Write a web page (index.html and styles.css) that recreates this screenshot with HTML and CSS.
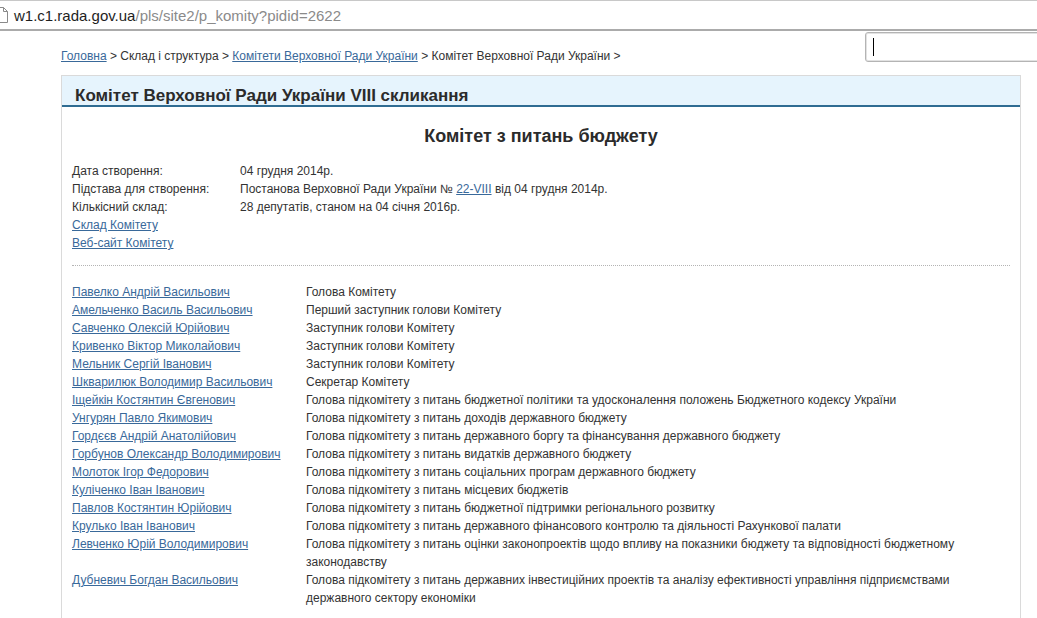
FILE: index.html
```html
<!DOCTYPE html>
<html lang="uk">
<head>
<meta charset="utf-8">
<title>Комітет з питань бюджету</title>
<link rel="stylesheet" href="styles.css">
</head>
<body>
<div class="addressbar">
  <svg class="page-icon" width="12" height="16" viewBox="0 0 12 16"><path d="M0.5 0.5 H7.5 L11.5 4.5 V15.5 H0.5 Z" fill="#fff" stroke="#8a8a8a"/><path d="M7.5 0.5 V4.5 H11.5" fill="none" stroke="#8a8a8a"/></svg>
  <span class="url"><span class="host">w1.c1.rada.gov.ua</span><span class="path">/pls/site2/p_komity?pidid=2622</span></span>
</div>
<div class="search"><span class="caret"></span></div>
<div class="page">
  <div class="breadcrumb"><a href="#">Головна</a> &gt; Склад і структура &gt; <a href="#">Комітети Верховної Ради України</a> &gt; Комітет Верховної Ради України &gt;</div>
  <div class="panel">
    <div class="panel-header">Комітет Верховної Ради України VIII скликання</div>
    <div class="panel-body">
      <h1 class="title">Комітет з питань бюджету</h1>
      <div class="info">
        <span class="label">Дата створення:</span><span>04 грудня 2014р.</span>
        <span class="label">Підстава для створення:</span><span>Постанова Верховної Ради України № <a href="#">22-VIII</a> від 04 грудня 2014р.</span>
        <span class="label">Кількісний склад:</span><span>28 депутатів, станом на 04 січня 2016р.</span>
        <span class="full"><a href="#">Склад Комітету</a></span>
        <span class="full"><a href="#">Веб-сайт Комітету</a></span>
      </div>
      <div class="divider"></div>
      <div class="members">
        <a href="#">Павелко Андрій Васильович</a><span>Голова Комітету</span>
        <a href="#">Амельченко Василь Васильович</a><span>Перший заступник голови Комітету</span>
        <a href="#">Савченко Олексій Юрійович</a><span>Заступник голови Комітету</span>
        <a href="#">Кривенко Віктор Миколайович</a><span>Заступник голови Комітету</span>
        <a href="#">Мельник Сергій Іванович</a><span>Заступник голови Комітету</span>
        <a href="#">Шкварилюк Володимир Васильович</a><span>Секретар Комітету</span>
        <a href="#">Іщейкін Костянтин Євгенович</a><span>Голова підкомітету з питань бюджетної політики та удосконалення положень Бюджетного кодексу України</span>
        <a href="#">Унгурян Павло Якимович</a><span>Голова підкомітету з питань доходів державного бюджету</span>
        <a href="#">Гордєєв Андрій Анатолійович</a><span>Голова підкомітету з питань державного боргу та фінансування державного бюджету</span>
        <a href="#">Горбунов Олександр Володимирович</a><span>Голова підкомітету з питань видатків державного бюджету</span>
        <a href="#">Молоток Ігор Федорович</a><span>Голова підкомітету з питань соціальних програм державного бюджету</span>
        <a href="#">Куліченко Іван Іванович</a><span>Голова підкомітету з питань місцевих бюджетів</span>
        <a href="#">Павлов Костянтин Юрійович</a><span>Голова підкомітету з питань бюджетної підтримки регіонального розвитку</span>
        <a href="#">Крулько Іван Іванович</a><span>Голова підкомітету з питань державного фінансового контролю та діяльності Рахункової палати</span>
        <a href="#">Левченко Юрій Володимирович</a><span>Голова підкомітету з питань оцінки законопроектів щодо впливу на показники бюджету та відповідності бюджетному законодавству</span>
        <a href="#">Дубневич Богдан Васильович</a><span>Голова підкомітету з питань державних інвестиційних проектів та аналізу ефективності управління підприємствами державного сектору економіки</span>
      </div>
    </div>
  </div>
</div>
</body>
</html>
```
FILE: styles.css
```css
* { box-sizing: border-box; }
html, body { margin: 0; padding: 0; background: #fff; }
body {
  font-family: "Liberation Sans", Arial, sans-serif;
  font-size: 12px;
  color: #333;
  position: relative;
  height: 618px;
  overflow: hidden;
}
a { color: #39699a; text-decoration: underline; }

.addressbar {
  height: 31px;
  border-top: 1px solid #c8c8c8;
  border-bottom: 2px solid #ababab;
  display: flex;
  align-items: center;
  font-size: 15px;
  white-space: nowrap;
}
.page-icon { margin-left: -4px; margin-right: 6px; flex: none; }
.host { color: #1e1e1e; }
.path { color: #8a8a8a; }

.search {
  position: absolute;
  top: 32px;
  left: 865px;
  width: 190px;
  height: 30px;
  border: 1px solid #b4b4b4;
  border-radius: 3px;
  box-shadow: inset 0 0 0 1px #e2e2e2;
  background: #fff;
}
.caret {
  position: absolute;
  left: 7px;
  top: 5px;
  width: 1px;
  height: 18px;
  background: #000;
}

.page { margin-left: 61px; width: 960px; }
.breadcrumb {
  padding-top: 18px;
  height: 44px;
  line-height: 14px;
  white-space: nowrap;
}

.panel {
  border: 1px solid #dadada;
  border-bottom: none;
}
.panel-header {
  background: #e6f4fd;
  border-bottom: 2px solid #2f6c92;
  padding: 10px 0 0 13px;
  height: 31px;
  line-height: 19px;
  font-size: 17px;
  font-weight: bold;
  color: #2b2b2b;
}
.panel-body { padding: 0 10px 40px 10px; }
.title {
  margin: 18px 0 0 0;
  text-align: center;
  font-size: 18px;
  line-height: 22px;
  font-weight: bold;
  color: #2b2b2b;
}
.info {
  margin-top: 15px;
  display: grid;
  grid-template-columns: 168px 1fr;
  line-height: 18px;
}
.info .full { grid-column: 1 / -1; }
.divider {
  margin-top: 13px;
  border-top: 1px dotted #b4b4b4;
}
.members {
  margin-top: 17px;
  display: grid;
  grid-template-columns: 234px 680px;
  line-height: 18px;
}
```
